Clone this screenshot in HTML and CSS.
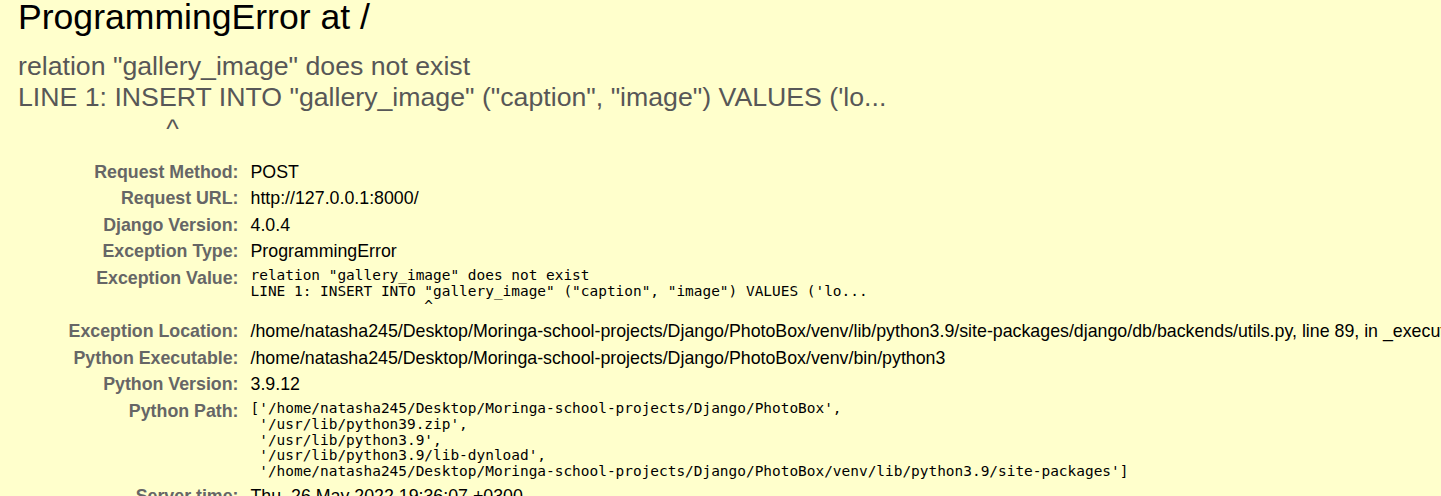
FILE: index.html
```html
<!DOCTYPE html>
<html lang="en">
<head>
<meta charset="utf-8">
<title>ProgrammingError at /</title>
<link rel="stylesheet" href="styles.css">
</head>
<body>
<div class="summary">
  <h1 class="title">ProgrammingError at /</h1>
  <pre class="exception-value">relation "gallery_image" does not exist
LINE 1: INSERT INTO "gallery_image" ("caption", "image") VALUES ('lo...
                    ^</pre>
  <table class="meta">
    <tbody>
      <tr><th>Request Method:</th><td>POST</td></tr>
      <tr><th>Request URL:</th><td>http://127.0.0.1:8000/</td></tr>
      <tr><th>Django Version:</th><td>4.0.4</td></tr>
      <tr><th>Exception Type:</th><td>ProgrammingError</td></tr>
      <tr><th>Exception Value:</th><td><pre class="mono">relation "gallery_image" does not exist
LINE 1: INSERT INTO "gallery_image" ("caption", "image") VALUES ('lo...
                    ^</pre></td></tr>
      <tr><th>Exception Location:</th><td><span class="fname">/home/natasha245/Desktop/Moringa-school-projects/Django/PhotoBox/venv/lib/python3.9/site-packages/django/db/backends/utils.py</span>, line 89, in _execute</td></tr>
      <tr><th>Python Executable:</th><td>/home/natasha245/Desktop/Moringa-school-projects/Django/PhotoBox/venv/bin/python3</td></tr>
      <tr><th>Python Version:</th><td>3.9.12</td></tr>
      <tr><th>Python Path:</th><td><pre class="mono">['/home/natasha245/Desktop/Moringa-school-projects/Django/PhotoBox',
 '/usr/lib/python39.zip',
 '/usr/lib/python3.9',
 '/usr/lib/python3.9/lib-dynload',
 '/home/natasha245/Desktop/Moringa-school-projects/Django/PhotoBox/venv/lib/python3.9/site-packages']</pre></td></tr>
      <tr><th>Server time:</th><td>Thu, 26 May 2022 19:36:07 +0300</td></tr>
    </tbody>
  </table>
</div>
</body>
</html>
```
FILE: styles.css
```css
html, body {
  margin: 0;
  padding: 0;
  overflow: hidden;
  background: #ffffcc;
}

body {
  font-family: "Liberation Sans", Arial, sans-serif;
  font-size: 17.8px;
  color: #000;
}

.summary {
  background: #ffffcc;
  padding: 0 0 20px 18px;
}

.title {
  margin: 0;
  font-size: 35.6px;
  line-height: 34.4px;
  font-weight: normal;
  color: #000;
  white-space: nowrap;
}

.exception-value {
  margin: 16.5px 0 13.8px 0;
  font-family: "Liberation Sans", Arial, sans-serif;
  font-size: 26.7px;
  line-height: 31.3px;
  color: #575757;
  white-space: pre;
}

.meta {
  border: none;
  border-collapse: collapse;
  background: transparent;
  width: max-content;
}

.meta th {
  width: 216.5px;
  text-align: right;
  vertical-align: top;
  color: #666;
  font-weight: bold;
  padding: 3px 7px 3px 4px;
  line-height: 20.6px;
  white-space: nowrap;
}

.meta td {
  vertical-align: top;
  padding: 3px 4px 3px 5px;
  line-height: 20.6px;
  white-space: nowrap;
}

.mono {
  margin: 0;
  font-family: "DejaVu Sans Mono", monospace;
  font-size: 14.45px;
  line-height: 15.75px;
  white-space: pre;
  color: #000;
}
```
